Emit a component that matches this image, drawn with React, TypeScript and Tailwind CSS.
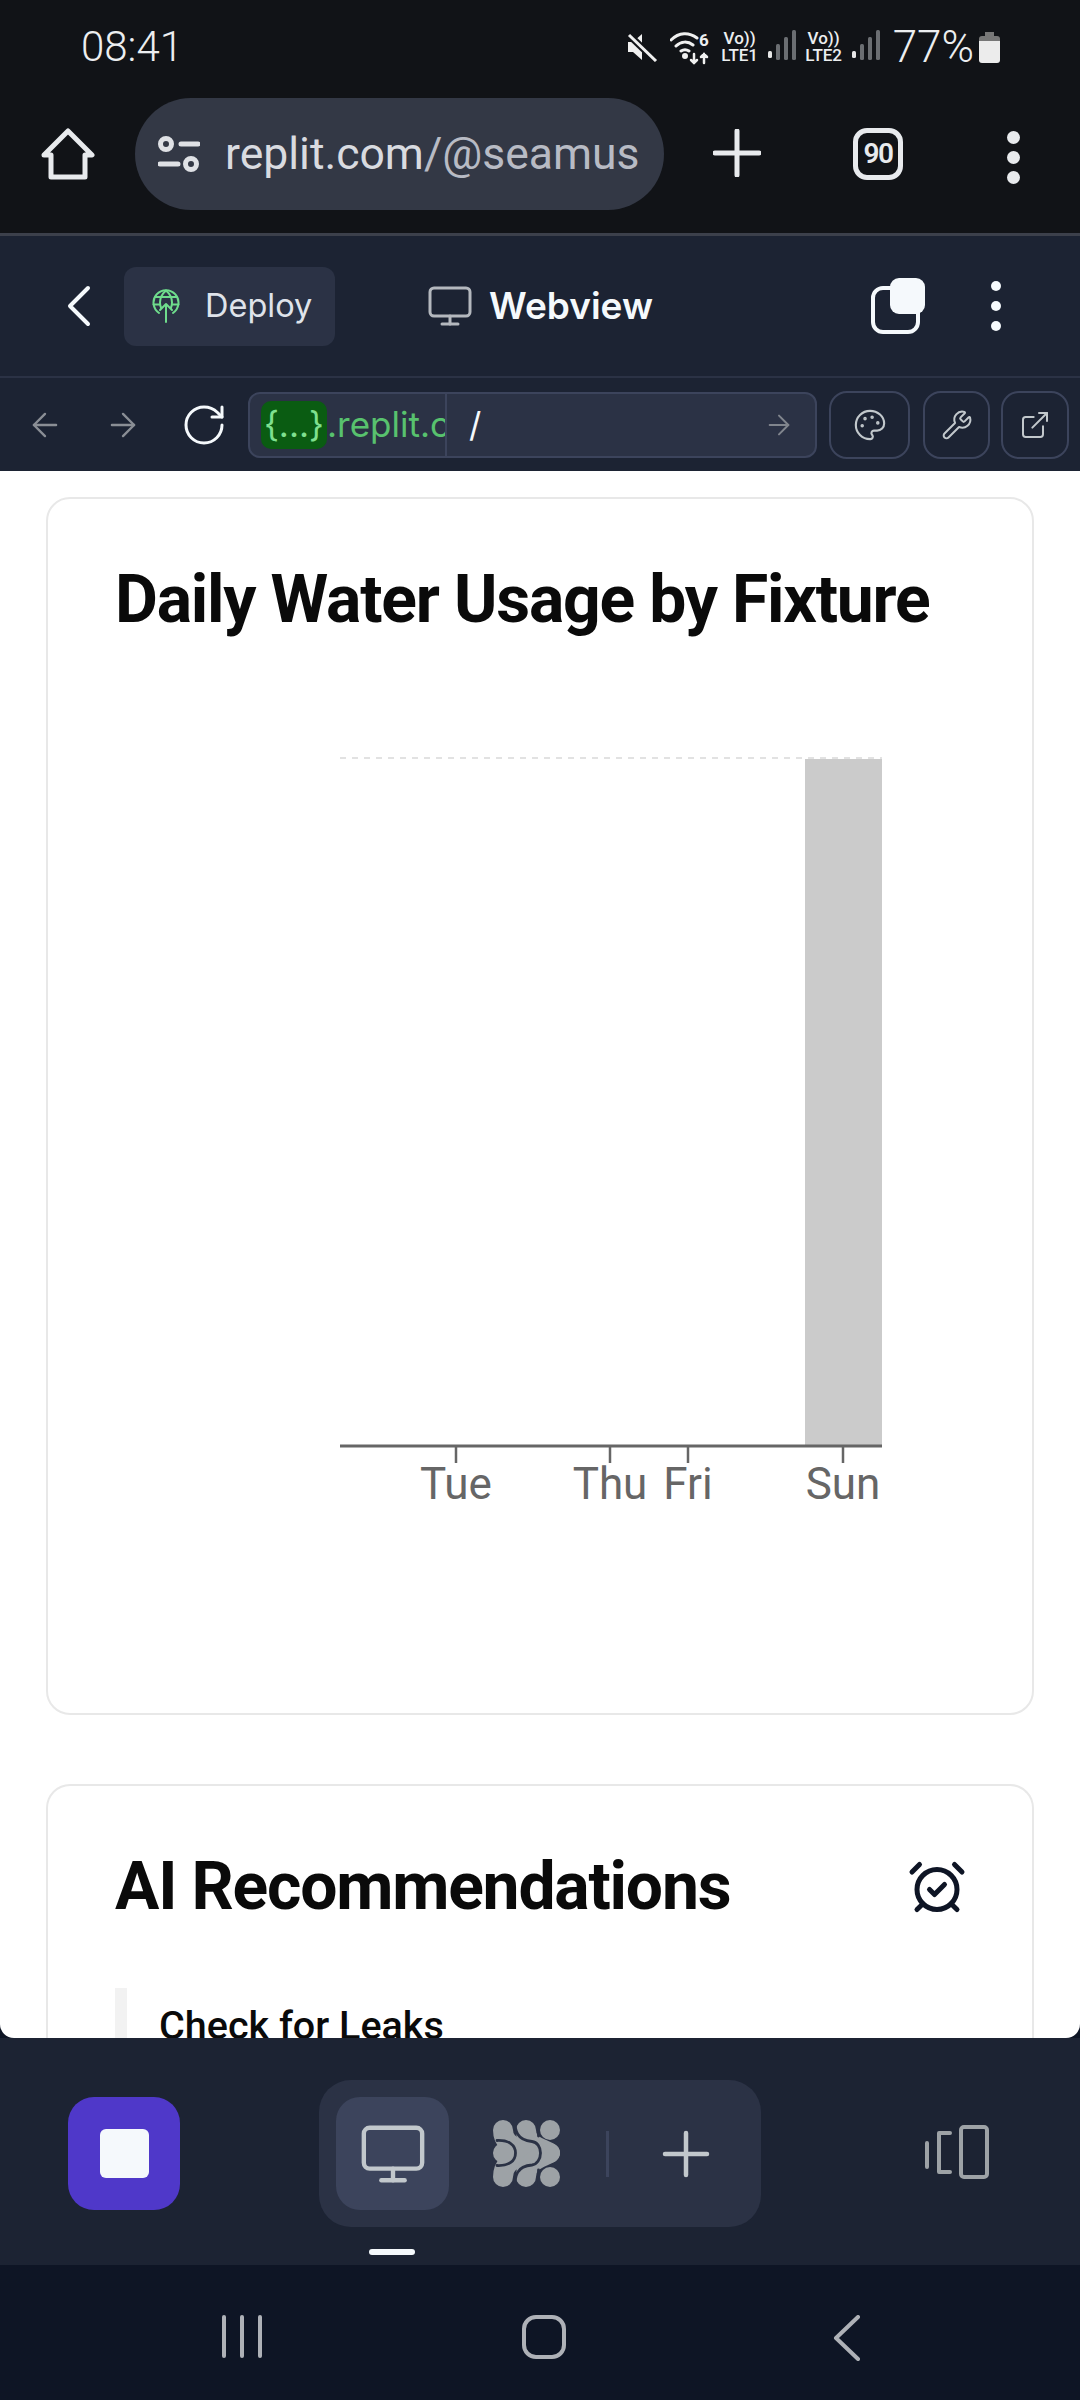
import type { ReactNode } from "react";
import { AlarmClockCheck, ArrowLeft, ArrowRight, ExternalLink, Monitor, Palette, Plus, RotateCw, Wrench } from "lucide-react";

function GlobeUp() {
  return (
    <svg width="28" height="34" viewBox="0 0 28 34" fill="none" stroke="#6fdc8c" strokeWidth="2" strokeLinecap="round" strokeLinejoin="round">
      <path d="M7 24A12.500 12.500 0 1 1 21 24" />
      <path d="M14 1.500c-4 3.500-6 7.500-6 12 0 2 .4 4 1.200 5.500M14 1.500c4 3.500 6 7.500 6 12 0 2-.4 4-1.200 5.500" />
      <path d="M3 8h22M1.500 15.500h6M20.500 15.500h6" />
      <path d="M14 33V15M8 21l6-6 6 6" />
    </svg>
  );
}

function AgentLogo() {
  return (
    <svg width="68" height="68" viewBox="14 15 68 68">
      <g fill="none" stroke="#9da2a6" strokeWidth="20" strokeLinecap="round">
        <path d="M24 25C24 40 38 42 47 48" />
        <path d="M47 25C47 40 60 42 71 48" />
        <path d="M24 72C24 56 38 54 47 48" />
        <path d="M47 72C47 56 60 54 71 48" />
      </g>
      <g fill="none" stroke="#2b3245" strokeWidth="2.800" strokeLinecap="round">
        <path d="M18 35.500C30 35 36.500 40 36.500 48C36.500 56 30 61 18 60.500" />
        <path d="M35.500 12C35.500 26 38 35 53 36.500C58 37 61.500 42 61.500 48C61.500 54 58 59.500 53 60C38 61 35.500 70 35.500 86" />
        <path d="M59.500 12V31M59.500 65V86" />
      </g>
      <circle cx="24" cy="48" r="10" fill="#9da2a6" />
      <circle cx="71" cy="25" r="10" fill="#9da2a6" />
      <circle cx="71" cy="72" r="10" fill="#9da2a6" />
    </svg>
  );
}

function Bars() {
  return (
    <svg width="28" height="30" viewBox="0 0 28 30" className="ml-[9px] mt-[6px]" fill="#6b6e72">
      <rect x="0" y="21" width="4" height="7" rx="1.500" fill="#e6e6e6" />
      <rect x="8" y="14" width="4" height="16" rx="1.500" />
      <rect x="16" y="7" width="4" height="23" rx="1.500" />
      <rect x="24" y="0" width="4" height="30" rx="1.500" />
    </svg>
  );
}

function Status() {
  return (
    <div className="flex h-[98px] shrink-0 items-start justify-between pl-[81px] pr-[80px] pt-[24px] font-['Roboto',sans-serif] text-[#eceef0]">
      <span className="text-[42px] font-light leading-[46px]">08:41</span>
      <div className="flex items-start">
        <svg width="32" height="30" viewBox="0 0 32 30" className="mt-[8px]" fill="#f0f0f0">
          <path d="M2 10h5l9-8v26l-9-8H2Z" />
          <path d="M2 2l27 26" stroke="#111317" strokeWidth="7" />
          <path d="M3 3l27 26" stroke="#f0f0f0" strokeWidth="3" />
        </svg>
        <svg width="40" height="34" viewBox="0 0 40 34" className="ml-[12px] mt-[7px]" fill="none" stroke="#f0f0f0" strokeWidth="3" strokeLinecap="round">
          <path d="M1 9c8-8 18-8 26-2M6 15c5-5 12-5 17-1M11 20c3-2 5-2 8 0" />
          <circle cx="15" cy="25" r="1.500" fill="#f0f0f0" />
          <path d="M24 23v9M21 29l3 3 3-3M34 32v-9M31 26l3-3 3 3" strokeWidth="2.500" />
        </svg>
        <span className="ml-[-11px] mt-[3px] text-[17px] font-bold leading-[26px]">6</span>
        <div className="ml-[12px] mt-[6px] flex w-[38px] flex-col items-center text-[17px] font-medium leading-[17px]">
          <span>Vo))</span>
          <span>LTE1</span>
        </div>
        <Bars />
        <div className="ml-[9px] mt-[6px] flex w-[38px] flex-col items-center text-[17px] font-medium leading-[17px]">
          <span>Vo))</span>
          <span>LTE2</span>
        </div>
        <Bars />
        <span className="ml-[13px] text-[44px] font-light leading-[46px]">77%</span>
        <svg width="21" height="31" viewBox="0 0 21 31" className="ml-[5px] mt-[8px]">
          <path d="M6 0h9v4H6Z" fill="#777" />
          <path d="M3 4h15a3 3 0 0 1 3 3v2H0V7a3 3 0 0 1 3-3Z" fill="#777" />
          <path d="M0 9h21v19a3 3 0 0 1-3 3H3a3 3 0 0 1-3-3Z" fill="#ececec" />
        </svg>
      </div>
    </div>
  );
}

function ChromeBar() {
  return (
    <div className="flex h-[135px] shrink-0 items-start pl-[41px] font-['Roboto',sans-serif]">
      <svg width="54" height="54" viewBox="0 0 54 54" className="mt-[29px]" fill="none" stroke="#e8eaed" strokeWidth="5" strokeLinejoin="round">
        <path d="M27 4 51 28H44V50H10V28H3Z" />
      </svg>
      <div className="ml-[40px] flex h-[112px] w-[529px] items-center rounded-full bg-[#333845] pl-[23px]">
        <svg width="42" height="36" viewBox="0 0 42 36" fill="none" stroke="#dfe1e5" strokeWidth="5" strokeLinecap="round">
          <circle cx="8" cy="8" r="5.500" />
          <path d="M23 8h17M2 28h18" />
          <circle cx="33" cy="28" r="5.500" />
        </svg>
        <span className="ml-[25px] whitespace-nowrap text-[44.500px] leading-none text-[#d9dbe0]">
          replit.com<span className="text-[#b8bbc4]">/@seamus</span>
        </span>
      </div>
      <svg width="48" height="48" viewBox="0 0 48 48" className="ml-[49px] mt-[31px]" fill="none" stroke="#e8eaed" strokeWidth="5" strokeLinecap="round">
        <path d="M24 2v44M2 24h44" />
      </svg>
      <div className="ml-[92px] mt-[30px] flex h-[52px] w-[50px] items-center justify-center rounded-[14px] border-[5px] border-[#e8eaed] text-[28px] font-semibold tracking-tighter text-[#e8eaed]">90</div>
      <div className="ml-[104px] mt-[33px] flex flex-col gap-[7px]">
        <span className="h-[13px] w-[13px] rounded-full bg-[#e8eaed]" />
        <span className="h-[13px] w-[13px] rounded-full bg-[#e8eaed]" />
        <span className="h-[13px] w-[13px] rounded-full bg-[#e8eaed]" />
      </div>
    </div>
  );
}

function ReplitHeader() {
  return (
    <div className="flex h-[145px] shrink-0 items-center border-t-[3px] border-b-2 border-t-[#3c404b] border-b-[#2b3245] bg-[#1c2333] font-['Inter',sans-serif]">
      <svg width="24" height="42" viewBox="0 0 24 42" className="ml-[67px]" fill="none" stroke="#f5f9fc" strokeWidth="4" strokeLinecap="round" strokeLinejoin="round">
        <path d="M21 3 3 21l18 18" />
      </svg>
      <div className="ml-[33px] flex h-[79px] w-[211px] items-center rounded-[12px] bg-[#2b3245] pl-[28px]">
        <GlobeUp />
        <span className="ml-[25px] text-[32.500px] text-[#dfe3ea]">Deploy</span>
      </div>
      <Monitor className="ml-[91px] h-[48px] w-[48px] text-[#b4b8be]" strokeWidth={1.500} />
      <span className="ml-[15px] text-[37px] font-semibold text-[#f5f9fc]">Webview</span>
      <div className="relative ml-[218px] h-[56px] w-[54px]">
        <span className="absolute bottom-0 left-0 h-[48px] w-[49px] rounded-[12px] border-[4px] border-[#f5f9fc]" />
        <span className="absolute right-0 top-0 h-[36px] w-[35px] rounded-[9px] bg-[#f5f9fc]" />
      </div>
      <div className="ml-[66px] flex flex-col gap-[10px]">
        <span className="h-[10px] w-[10px] rounded-full bg-[#f5f9fc]" />
        <span className="h-[10px] w-[10px] rounded-full bg-[#f5f9fc]" />
        <span className="h-[10px] w-[10px] rounded-full bg-[#f5f9fc]" />
      </div>
    </div>
  );
}

function ToolBtn({ className, children }: { className: string; children: ReactNode }) {
  return <div className={"flex h-[68px] items-center justify-center rounded-[18px] border-2 border-[#3c445c] " + className}>{children}</div>;
}

function Toolbar() {
  return (
    <div className="flex h-[93px] shrink-0 items-center bg-[#1c2333] font-['Inter',sans-serif]">
      <ArrowLeft className="ml-[26px] h-[38px] w-[38px] text-[#8a8e95]" strokeWidth={1.500} />
      <ArrowRight className="ml-[40px] h-[38px] w-[38px] text-[#8a8e95]" strokeWidth={1.500} />
      <RotateCw className="ml-[38px] h-[48px] w-[48px] text-[#f5f9fc]" strokeWidth={1.500} />
      <div className="ml-[20px] flex h-[66px] w-[569px] items-center overflow-hidden rounded-[12px] border-2 border-[#3c445c] bg-[#2b3245]">
        <div className="flex h-[62px] w-[197px] shrink-0 items-center overflow-hidden whitespace-nowrap border-r-2 border-[#3c445c] pl-[11px] text-[35px] text-[#58c26e]">
          <span className="flex h-[48px] w-[66px] shrink-0 items-center justify-center rounded-[10px] bg-[#0a5c12] text-[#7fe08f]">{"{...}"}</span>
          <span>.replit.co</span>
        </div>
        <span className="ml-[22px] text-[34px] text-[#f5f9fc]">/</span>
        <ArrowRight className="ml-auto mr-[20px] h-[32px] w-[32px] text-[#80858d]" strokeWidth={1.500} />
      </div>
      <ToolBtn className="ml-[12px] w-[81px]">
        <Palette className="h-[34px] w-[34px] text-[#c2c8cc]" strokeWidth={1.500} />
      </ToolBtn>
      <ToolBtn className="ml-[13px] w-[67px]">
        <Wrench className="h-[32px] w-[32px] text-[#c2c8cc]" strokeWidth={1.500} />
      </ToolBtn>
      <ToolBtn className="ml-[11px] w-[68px]">
        <ExternalLink className="h-[32px] w-[32px] text-[#c2c8cc]" strokeWidth={1.500} />
      </ToolBtn>
    </div>
  );
}

function Chart() {
  const ticks = [
    { x: 456, t: "Tue" },
    { x: 610, t: "Thu" },
    { x: 688, t: "Fri" },
    { x: 843, t: "Sun" },
  ];
  return (
    <svg width="830" height="770" viewBox="115 740 830 770" className="block" fontFamily="Roboto, sans-serif">
      <line x1="340" x2="882" y1="757" y2="757" stroke="#e2e2e2" strokeWidth="2" strokeDasharray="6 6" />
      <rect x="805" y="758" width="77" height="686" fill="#cbcbcb" />
      <line x1="340" x2="882" y1="1445" y2="1445" stroke="#666" strokeWidth="3" />
      {ticks.map((k) => (
        <g key={k.t}>
          <line x1={k.x} x2={k.x} y1="1446" y2="1462" stroke="#666" strokeWidth="2.500" />
          <text x={k.x} y="1498" textAnchor="middle" fontSize="44" fill="#666">{k.t}</text>
        </g>
      ))}
    </svg>
  );
}

function Content() {
  return (
    <div className="flex-1 overflow-hidden rounded-b-[14px] bg-white pt-[26px] font-['Roboto',sans-serif] text-[#0a0a0a]">
      <div className="mx-[46px] flex h-[1218px] flex-col rounded-[24px] border-2 border-[#e8e8e8] px-[67px] pt-[65px]">
        <h2 className="whitespace-nowrap text-[66px] font-bold leading-[72px] tracking-[-1.200px]">Daily Water Usage by Fixture</h2>
        <div className="mt-[105px]">
          <Chart />
        </div>
      </div>
      <div className="mx-[46px] mt-[69px] rounded-t-[24px] border-2 border-b-0 border-[#e8e8e8] px-[67px] pt-[65px]">
        <div className="flex items-center justify-between">
          <h2 className="whitespace-nowrap text-[66px] font-bold leading-[72px] tracking-[-1.200px]">AI Recommendations</h2>
          <AlarmClockCheck className="mr-[-2px] h-[60px] w-[60px] text-[#0e1525]" strokeWidth={2} />
        </div>
        <div className="mt-[65px] border-l-[12px] border-[#f2f2f2] pl-[32px] pt-[16px]">
          <span className="text-[39.500px] font-medium leading-[44px]">Check for Leaks</span>
        </div>
      </div>
    </div>
  );
}

function BottomPanel() {
  return (
    <div className="flex h-[227px] shrink-0 items-start bg-[#1c2333] pt-[42px]">
      <div className="ml-[68px] mt-[17px] flex h-[113px] w-[112px] items-center justify-center rounded-[26px] bg-[#4f38c9]">
        <span className="h-[49px] w-[49px] rounded-[6px] bg-[#f5f9fc]" />
      </div>
      <div className="relative ml-[139px] flex h-[147px] w-[442px] items-center rounded-[32px] bg-[#2b3245] pl-[17px]">
        <div className="flex h-[113px] w-[113px] items-center justify-center rounded-[24px] bg-[#3c445c]">
          <Monitor className="h-[70px] w-[70px] text-[#c2c8cc]" strokeWidth={1.500} />
        </div>
        <div className="ml-[44px]">
          <AgentLogo />
        </div>
        <span className="ml-[45px] h-[46px] w-[3px] bg-[#3c445c]" />
        <Plus className="ml-[41px] h-[72px] w-[72px] text-[#c2c8cc]" strokeWidth={1.500} />
        <span className="absolute bottom-[-28px] left-[50px] h-[6px] w-[46px] rounded-full bg-[#f5f9fc]" />
      </div>
      <svg width="64" height="54" viewBox="0 0 64 54" className="ml-[164px] mt-[45px]" fill="none" stroke="#9da2a6" strokeWidth="4" strokeLinecap="round" strokeLinejoin="round">
        <path d="M2 18v24M25 8H14v39h11" />
        <rect x="36" y="2" width="26" height="50" rx="3" />
      </svg>
    </div>
  );
}

function NavBar() {
  return (
    <div className="flex h-[135px] shrink-0 items-start bg-[#0e1525] pt-[50px]">
      <div className="ml-[222px] flex gap-[14px]">
        <span className="h-[43px] w-[4px] rounded-full bg-[#aeb1b7]" />
        <span className="h-[43px] w-[4px] rounded-full bg-[#aeb1b7]" />
        <span className="h-[43px] w-[4px] rounded-full bg-[#aeb1b7]" />
      </div>
      <span className="ml-[260px] h-[44px] w-[44px] rounded-[14px] border-[4px] border-[#aeb1b7]" />
      <svg width="28" height="46" viewBox="0 0 28 46" className="ml-[267px]" fill="none" stroke="#aeb1b7" strokeWidth="4" strokeLinecap="round" strokeLinejoin="round">
        <path d="M25 2 3 23l22 21" />
      </svg>
    </div>
  );
}

export default function App() {
  return (
    <div className="flex h-[2400px] w-[1080px] flex-col overflow-hidden bg-[#111317]">
      <Status />
      <ChromeBar />
      <ReplitHeader />
      <Toolbar />
      <div className="flex min-h-0 flex-1 flex-col bg-[#0e1525]">
        <Content />
      </div>
      <BottomPanel />
      <NavBar />
    </div>
  );
}
